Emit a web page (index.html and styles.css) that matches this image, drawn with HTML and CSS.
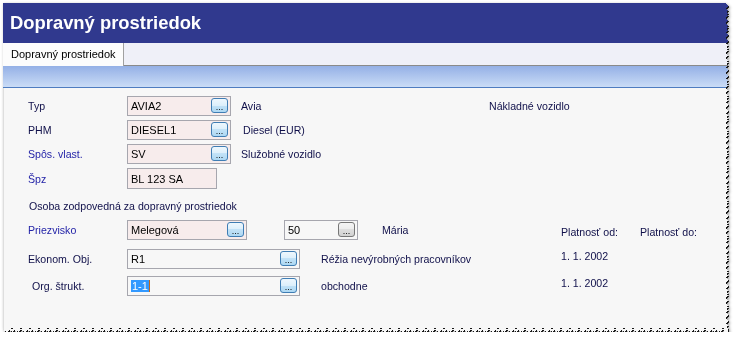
FILE: index.html
```html
<!DOCTYPE html>
<html lang="sk">
<head>
  <meta charset="UTF-8">
  <title>Dopravný prostriedok</title>
  <link rel="stylesheet" href="styles.css">
</head>
<body>
  <div class="page">
    <div class="sheet">
      <header class="title-bar">
        <h1>Dopravný prostriedok</h1>
      </header>

      <div class="tabs">
        <div class="tab active">Dopravný prostriedok</div>
      </div>
      <div class="band"></div>

      <div class="form">
        <div class="row">
          <span class="label">Typ</span>
          <div class="field req w104"><span class="value">AVIA2</span><span class="btn">...</span></div>
          <span class="desc first">Avia</span>
          <span class="desc">Nákladné vozidlo</span>
        </div>
        <div class="row">
          <span class="label">PHM</span>
          <div class="field req w104"><span class="value">DIESEL1</span><span class="btn">...</span></div>
          <span class="desc first nudge">Diesel (EUR)</span>
        </div>
        <div class="row">
          <span class="label blue">Spôs. vlast.</span>
          <div class="field req w104"><span class="value">SV</span><span class="btn">...</span></div>
          <span class="desc first">Služobné vozidlo</span>
        </div>
        <div class="row spz">
          <span class="label blue">Špz</span>
          <div class="field req w90"><span class="value">BL 123 SA</span></div>
        </div>

        <div class="section">Osoba zodpovedná za dopravný prostriedok</div>

        <div class="row person">
          <span class="label blue">Priezvisko</span>
          <div class="field req w120"><span class="value">Melegová</span><span class="btn">...</span></div>
          <div class="field w74 gap37"><span class="value">50</span><span class="btn grey">...</span></div>
          <span class="desc w179 gap24">Mária</span>
          <span class="desc w79 low">Platnosť od:</span>
          <span class="desc low">Platnosť do:</span>
        </div>
        <div class="row ekon">
          <span class="label">Ekonom. Obj.</span>
          <div class="field w173"><span class="value">R1</span><span class="btn">...</span></div>
          <span class="desc w240 gap21">Réžia nevýrobných pracovníkov</span>
          <span class="desc date">1. 1. 2002</span>
        </div>
        <div class="row org">
          <span class="label shift">Org. štrukt.</span>
          <div class="field w173"><span class="value"><span class="sel">1-1</span></span><span class="btn">...</span></div>
          <span class="desc w240 gap21">obchodne</span>
          <span class="desc date">1. 1. 2002</span>
        </div>
      </div>
    </div>
  </div>
</body>
</html>
```

FILE: styles.css
```css
body {
  margin: 0;
  background-color: #fff;
  font-family: "Liberation Sans", Arial, sans-serif;
  font-size: 10.6px;
  color: #10104a;
}

.page {
  padding: 3px 0 0 3px;
  filter: drop-shadow(1px 1px 0 rgba(0,0,0,0.85)) drop-shadow(1px 1px 1.5px rgba(0,0,0,0.4));
}

/* torn paper edge on the right and bottom */
.sheet {
  width: 725px;
  height: 329px;
  background-color: #f7f7f7;
  -webkit-mask:
    linear-gradient(#000 0 0) left top / calc(100% - 4px) calc(100% - 4px) no-repeat,
    conic-gradient(from 225deg at right, #000 90deg, #0000 0) right top / 3px 5px repeat-y,
    conic-gradient(from 225deg at right, #000 90deg, #0000 0) right top / 4px 7px repeat-y,
    conic-gradient(from -45deg at bottom, #000 90deg, #0000 0) left bottom / 6px 3px repeat-x,
    conic-gradient(from -45deg at bottom, #000 90deg, #0000 0) left bottom / 9px 4px repeat-x;
  mask:
    linear-gradient(#000 0 0) left top / calc(100% - 4px) calc(100% - 4px) no-repeat,
    conic-gradient(from 225deg at right, #000 90deg, #0000 0) right top / 3px 5px repeat-y,
    conic-gradient(from 225deg at right, #000 90deg, #0000 0) right top / 4px 7px repeat-y,
    conic-gradient(from -45deg at bottom, #000 90deg, #0000 0) left bottom / 6px 3px repeat-x,
    conic-gradient(from -45deg at bottom, #000 90deg, #0000 0) left bottom / 9px 4px repeat-x;
}

.title-bar {
  height: 40px;
  background-color: #30398e;
  display: flex;
  align-items: center;
  padding-left: 7px;
}

h1 {
  margin: 0;
  font-size: 18.4px;
  font-weight: bold;
  color: #fff;
}

.tabs {
  height: 22px;
  background-color: #eff0f8;
  border-bottom: 1px solid #8a8a8a;
  display: flex;
}

.tab {
  width: 121px;
  height: 23px;
  box-sizing: border-box;
  background-color: #fcfcfc;
  border-right: 1px solid #a0a0a0;
  padding: 5px 0 0 8px;
  font-size: 11px;
  color: #000;
}

.band {
  height: 21px;
  background: linear-gradient(#94b0e6, #cadcf6);
  border-bottom: 1px solid #4e7cc0;
}

.form {
  height: 242px;
  border-left: 1px solid #dedede;
  padding: 8px 0 0 24px;
}

.row {
  display: flex;
  align-items: center;
  height: 20px;
  margin-bottom: 4px;
}

.row.spz {
  margin-top: 2px;
  height: 21px;
}

.label {
  width: 99px;
  flex-shrink: 0;
}

.label.blue {
  color: #2424a8;
}

.label.shift {
  padding-left: 4px;
  width: 95px;
}

.field {
  height: 20px;
  box-sizing: border-box;
  border: 1px solid #a6a6ae;
  background-color: #f7f7f7;
  display: flex;
  align-items: center;
  justify-content: space-between;
  padding: 0 2px 0 3px;
  flex-shrink: 0;
  color: #000;
  font-size: 11px;
}

.field.req {
  background-color: #f7ecec;
}

.w104 { width: 104px; }
.w90 { width: 90px; height: 21px; }
.w120 { width: 120px; }
.w74 { width: 74px; }
.w173 { width: 173px; }

.btn {
  width: 17px;
  height: 15px;
  box-sizing: border-box;
  margin-top: -2px;
  border: 1px solid #3f7db4;
  border-radius: 3px;
  background: linear-gradient(#eef7fd, #dceffb 50%, #c2e2f7 50%, #add8f3);
  display: flex;
  justify-content: center;
  align-items: flex-end;
  font-size: 9px;
  line-height: 9px;
  color: #000;
}

.btn.grey {
  border-color: #777;
  background: linear-gradient(#f4f4f4, #ececec 50%, #dedede 50%, #d2d2d2);
}

.sel {
  background-color: #3399ff;
  color: #fff;
  border-right: 1px solid #c4671c;
  padding: 0 1px;
}

.desc {
  flex-shrink: 0;
}

.desc.first { margin-left: 10px; width: 248px; }
.desc.nudge { padding-left: 2px; width: 246px; }
.desc.w179 { width: 179px; }
.desc.w79 { width: 79px; }
.desc.w240 { width: 240px; }

.row .gap37 { margin-left: 37px; }
.row .gap24 { margin-left: 24px; }
.row .gap21 { margin-left: 21px; }

.desc.low {
  margin-top: 4px;
}

.desc.date {
  align-self: flex-start;
  margin-top: 1px;
}

.section {
  margin: 11px 0 8px 1px;
}

.row.person {
  margin-bottom: 9px;
}

.row.ekon {
  margin-bottom: 7px;
}
```
